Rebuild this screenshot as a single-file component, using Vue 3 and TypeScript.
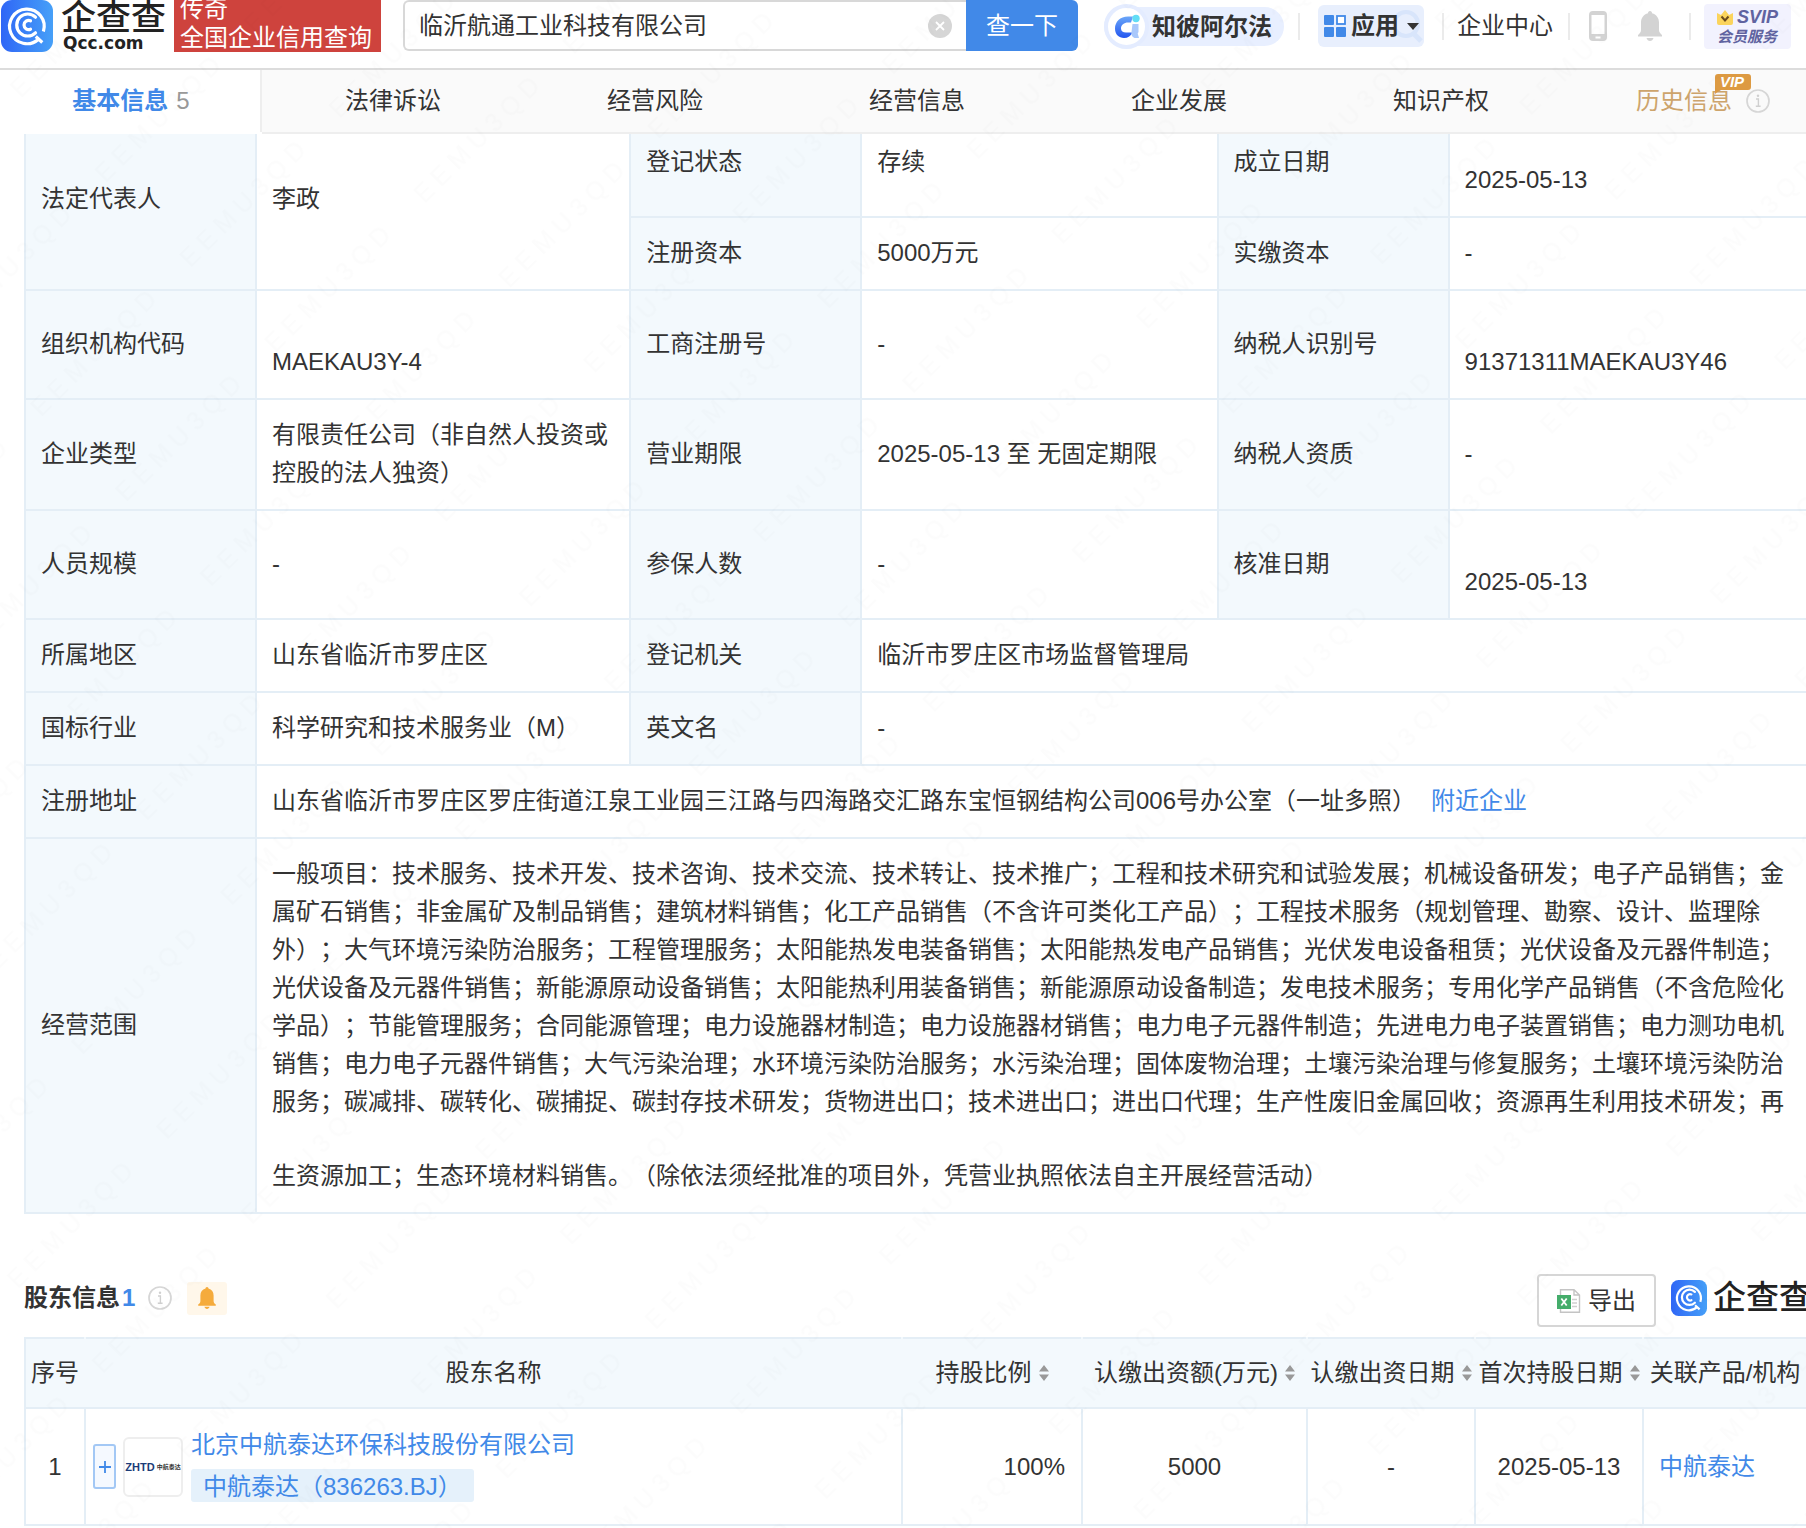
<script setup lang="ts">
import { ref } from 'vue'

interface Tab {
  label: string
  count?: number
  vip?: boolean
}

interface Column {
  label: string
  sortable: boolean
}

const keyword = ref('临沂航通工业科技有限公司')

const tabs: Tab[] = [
  { label: '基本信息', count: 5 },
  { label: '法律诉讼' },
  { label: '经营风险' },
  { label: '经营信息' },
  { label: '企业发展' },
  { label: '知识产权' },
  { label: '历史信息', vip: true },
]

const columns: Column[] = [
  { label: '序号', sortable: false },
  { label: '股东名称', sortable: false },
  { label: '持股比例', sortable: true },
  { label: '认缴出资额(万元)', sortable: true },
  { label: '认缴出资日期', sortable: true },
  { label: '首次持股日期', sortable: true },
  { label: '关联产品/机构', sortable: false },
]

const scope =
  '一般项目：技术服务、技术开发、技术咨询、技术交流、技术转让、技术推广；工程和技术研究和试验发展；机械设备研发；电子产品销售；金属矿石销售；非金属矿及制品销售；建筑材料销售；化工产品销售（不含许可类化工产品）；工程技术服务（规划管理、勘察、设计、监理除外）；大气环境污染防治服务；工程管理服务；太阳能热发电装备销售；太阳能热发电产品销售；光伏发电设备租赁；光伏设备及元器件制造；光伏设备及元器件销售；新能源原动设备销售；太阳能热利用装备销售；新能源原动设备制造；发电技术服务；专用化学产品销售（不含危险化学品）；节能管理服务；合同能源管理；电力设施器材制造；电力设施器材销售；电力电子元器件制造；先进电力电子装置销售；电力测功电机销售；电力电子元器件销售；大气污染治理；水环境污染防治服务；水污染治理；固体废物治理；土壤污染治理与修复服务；土壤环境污染防治服务；碳减排、碳转化、碳捕捉、碳封存技术研发；货物进出口；技术进出口；进出口代理；生产性废旧金属回收；资源再生利用技术研发；再生资源加工；生态环境材料销售。（除依法须经批准的项目外，凭营业执照依法自主开展经营活动）'
</script>

<template>
  <div class="page">
    <svg width="0" height="0" class="defs" aria-hidden="true">
      <defs>
        <linearGradient id="brand-blue" x1="0" y1="0" x2="1" y2="0">
          <stop offset="0" stop-color="#2f66f6" />
          <stop offset="1" stop-color="#46a0f8" />
        </linearGradient>
        <linearGradient id="alpha-blue" x1="0" y1="0" x2="0" y2="1">
          <stop offset="0" stop-color="#6aa6f8" />
          <stop offset="1" stop-color="#2456f0" />
        </linearGradient>
        <symbol id="brand" viewBox="0 0 52 52">
          <rect width="52" height="52" rx="11" fill="url(#brand-blue)" />
          <g fill="none" stroke="#fff" stroke-width="3.2">
            <path d="M37.500 39.200A17.300 17.300 0 1 1 42.400 31.500M34.800 36.500l6.500 6" />
            <path d="M34.500 17.200A11 11 0 1 0 34.500 32.800" stroke-linecap="round" />
            <path d="M29.500 20.800A4.600 4.600 0 1 0 29.500 29.200" stroke-linecap="round" />
          </g>
        </symbol>
        <symbol id="info" viewBox="0 0 24 24">
          <circle cx="12" cy="12" r="11" fill="none" stroke="#d6d6d6" stroke-width="1.700" />
          <path d="M10 10h2.400v7M9.800 17.300h4.800" fill="none" stroke="#d0d0d0" stroke-width="1.400" />
          <circle cx="12" cy="6.800" r="1.200" fill="#d0d0d0" />
        </symbol>
        <symbol id="bell" viewBox="0 0 24 30">
          <path
            d="M12 0c1.400 0 2 1 2 2.200 4.500 1.200 7 4.800 7 9.300v7.500c0 2 1 3.300 3 5v1.500H0V24c2-1.700 3-3 3-5v-7.500c0-4.500 2.500-8.100 7-9.300C10 1 10.600 0 12 0zM8.500 27h7c-.6 1.900-1.800 3-3.500 3s-2.900-1.100-3.500-3z"
            fill="currentColor"
          />
        </symbol>
      </defs>
    </svg>

    <header class="head">
      <div class="topbar">
        <a class="brand" href="#" aria-label="企查查">
          <svg class="brand-mark"><use href="#brand" /></svg>
          <span class="brand-text">
            <span class="brand-cn">企查查</span>
            <span class="brand-en">Qcc.com</span>
          </span>
        </a>
        <p class="slogan">传奇<br />全国企业信用查询</p>

        <form class="search" @submit.prevent>
          <div class="search-box">
            <input v-model="keyword" class="search-input" type="text" aria-label="搜索企业" />
            <button class="clear" type="button" aria-label="清空" @click="keyword = ''">
              <svg width="24" height="24" viewBox="0 0 24 24">
                <circle cx="12" cy="12" r="12" fill="#d6d6d6" />
                <path d="M8 8l8 8M16 8l-8 8" stroke="#fff" stroke-width="1.800" />
              </svg>
            </button>
          </div>
          <button class="search-btn" type="submit">查一下</button>
        </form>

        <a class="alpha" href="#">
          <span class="alpha-icon">
            <svg width="28" height="28" viewBox="0 0 28 28">
              <path
                d="M20 3.500H15C7 3.500 2 9 2 15.500 2 21.500 6 25 11 25c4 0 7-2 8.500-5.500h-5C10.500 20 8 18.500 8 15.500c0-3.500 3-6 7-6h3z"
                fill="url(#alpha-blue)"
              />
              <path d="M19.500 11h6v8l-.8 1.500L26 25h-4.500c-2.500-1-3.500-3-3-6z" fill="#a9c8fb" />
              <circle cx="23" cy="5.500" r="3.700" fill="#62ddf5" />
            </svg>
          </span>
          <span class="alpha-text">知彼阿尔法</span>
        </a>

        <nav class="tools" aria-label="工具">
          <i class="divider"></i>
          <button class="apps" type="button">
            <svg width="22" height="22" viewBox="0 0 22 22">
              <g fill="#4189e8">
                <rect width="10" height="10" rx="1" />
                <rect y="12" width="10" height="10" rx="1" />
                <rect x="12" y="12" width="10" height="10" rx="1" />
              </g>
              <rect x="13" y="1" width="8" height="8" fill="#fff" stroke="#4189e8" stroke-width="1.800" />
            </svg>
            <span>应用</span>
            <svg class="caret" width="12" height="7" viewBox="0 0 12 7"><path d="M0 0h12L6 7z" fill="#333" /></svg>
            <svg class="lens" width="32" height="36" viewBox="0 0 32 36">
              <circle cx="14" cy="15" r="12" fill="none" stroke="#c9dcfa" stroke-width="4" />
              <path d="M22 25l7 7" stroke="#c9dcfa" stroke-width="5" />
            </svg>
          </button>
          <i class="divider"></i>
          <a class="center" href="#">企业中心</a>
          <i class="divider"></i>
          <a class="icon-link" href="#" aria-label="手机版">
            <svg width="18" height="30" viewBox="0 0 18 30">
              <path
                fill-rule="evenodd"
                d="M4 0h10a4 4 0 0 1 4 4v22a4 4 0 0 1-4 4H4a4 4 0 0 1-4-4V4a4 4 0 0 1 4-4zM2.500 4v19h13V4zM6.500 25.500v2h5v-2z"
                fill="#d3d3d3"
              />
            </svg>
          </a>
          <a class="icon-link bell-link" href="#" aria-label="消息">
            <svg width="24" height="30"><use href="#bell" /></svg>
          </a>
          <i class="divider"></i>
          <a class="svip" href="#">
            <span class="svip-top">
              <svg width="16" height="15" viewBox="0 0 16 15">
                <path d="M0 3l4 2 4-5 4 5 4-2v10a2 2 0 0 1-2 2H2a2 2 0 0 1-2-2z" fill="#fbd45c" />
                <path d="M4.500 6.500L8 10.500l3.500-4" fill="none" stroke="#6b4a1c" stroke-width="2" />
              </svg>
              <span>SVIP</span>
            </span>
            <span class="svip-bottom">会员服务</span>
          </a>
        </nav>
      </div>

      <nav class="tabs" aria-label="企业信息">
        <a v-for="(tab, i) in tabs" :key="tab.label" href="#" class="tab" :class="{ active: i === 0, history: tab.vip }">
          <span class="tab-label">
            {{ tab.label }}
            <svg v-if="tab.vip" class="vip" width="36" height="20" viewBox="0 0 36 20" role="img" aria-label="VIP">
              <path d="M3 0h30a3 3 0 0 1 3 3v10a3 3 0 0 1-3 3H5l-5 4V3a3 3 0 0 1 3-3z" fill="#dd9a42" />
              <text x="17" y="13" text-anchor="middle" class="vip-text">VIP</text>
            </svg>
          </span>
          <span v-if="tab.count" class="tab-count">{{ tab.count }}</span>
          <svg v-if="tab.vip" class="tab-info" width="24" height="24"><use href="#info" /></svg>
        </a>
      </nav>
    </header>

    <main class="main">
      <table class="info">
        <colgroup>
          <col class="c-label" />
          <col class="c-first" />
          <col class="c-label" />
          <col class="c-second" />
          <col class="c-label" />
          <col />
        </colgroup>
        <tbody>
          <tr>
            <th rowspan="2" scope="row">法定代表人</th>
            <td rowspan="2">李政</td>
            <th scope="row">登记状态</th>
            <td>存续</td>
            <th scope="row">成立日期</th>
            <td>2025-05-13<i class="copy-slot"></i></td>
          </tr>
          <tr>
            <th scope="row">注册资本</th>
            <td>5000万元</td>
            <th scope="row">实缴资本</th>
            <td>-</td>
          </tr>
          <tr>
            <th scope="row">组织机构代码</th>
            <td>MAEKAU3Y-4<i class="copy-slot"></i></td>
            <th scope="row">工商注册号</th>
            <td>-</td>
            <th scope="row">纳税人识别号</th>
            <td>91371311MAEKAU3Y46<i class="copy-slot"></i></td>
          </tr>
          <tr>
            <th scope="row">企业类型</th>
            <td>有限责任公司（非自然人投资或控股的法人独资）</td>
            <th scope="row">营业期限</th>
            <td>2025-05-13 至 无固定期限</td>
            <th scope="row">纳税人资质</th>
            <td>-</td>
          </tr>
          <tr>
            <th scope="row">人员规模</th>
            <td>-</td>
            <th scope="row">参保人数</th>
            <td>-</td>
            <th scope="row">核准日期</th>
            <td>2025-05-13<i class="copy-slot"></i></td>
          </tr>
          <tr>
            <th scope="row">所属地区</th>
            <td>山东省临沂市罗庄区</td>
            <th scope="row">登记机关</th>
            <td colspan="3">临沂市罗庄区市场监督管理局</td>
          </tr>
          <tr>
            <th scope="row">国标行业</th>
            <td>科学研究和技术服务业（M）</td>
            <th scope="row">英文名</th>
            <td colspan="3">-</td>
          </tr>
          <tr>
            <th scope="row">注册地址</th>
            <td colspan="5">
              山东省临沂市罗庄区罗庄街道江泉工业园三江路与四海路交汇路东宝恒钢结构公司006号办公室（一址多照）<a
                class="nearby"
                href="#"
                >附近企业</a
              >
            </td>
          </tr>
          <tr>
            <th scope="row">经营范围</th>
            <td colspan="5">{{ scope }}<i class="copy-slot"></i></td>
          </tr>
        </tbody>
      </table>

      <section class="holders">
        <div class="section-head">
          <h2 class="section-title">股东信息<span class="section-count">1</span></h2>
          <svg class="section-info" width="24" height="24"><use href="#info" /></svg>
          <button class="follow" type="button" aria-label="监控">
            <svg width="18" height="22"><use href="#bell" /></svg>
          </button>
          <button class="export" type="button">
            <svg width="24" height="24" viewBox="0 0 24 24">
              <path d="M3.500.8H17L22.500 6v17.200h-19zM17 .8V6h5.500" fill="#fff" stroke="#c4c4c4" stroke-width="1.400" />
              <path d="M15 10.500h5M15 14h5M15 17.500h5" stroke="#cfcfcf" stroke-width="1.300" />
              <rect y="6" width="14" height="14" fill="#45ad6b" />
              <path d="M4.300 9.500l5.400 7M9.700 9.500l-5.400 7" stroke="#fff" stroke-width="1.800" />
            </svg>
            导出
          </button>
          <div class="stamp">
            <svg width="36" height="36"><use href="#brand" /></svg>
            <span class="stamp-text">企查查</span>
          </div>
        </div>

        <table class="list">
          <colgroup>
            <col class="l-no" />
            <col />
            <col class="l-ratio" />
            <col class="l-amount" />
            <col class="l-date" />
            <col class="l-date" />
            <col class="l-org" />
          </colgroup>
          <thead>
            <tr>
              <th v-for="col in columns" :key="col.label" scope="col">
                <button v-if="col.sortable" class="sort" type="button">
                  {{ col.label }}
                  <svg width="10" height="16" viewBox="0 0 10 16">
                    <path d="M5 0l5 6.500H0zM5 16L0 9.500h10z" fill="#999" />
                  </svg>
                </button>
                <template v-else>{{ col.label }}</template>
              </th>
            </tr>
          </thead>
          <tbody>
            <tr>
              <td>1</td>
              <td>
                <div class="holder">
                  <button class="expand" type="button" aria-label="展开">
                    <svg width="12" height="12" viewBox="0 0 12 12">
                      <path d="M6 0v12M0 6h12" stroke="#4189e8" stroke-width="1.800" />
                    </svg>
                  </button>
                  <span class="holder-logo"><b>ZHTD</b><small>中航泰达</small></span>
                  <div class="holder-names">
                    <a href="#">北京中航泰达环保科技股份有限公司</a>
                    <a class="stock" href="#">中航泰达（836263.BJ）</a>
                  </div>
                </div>
              </td>
              <td class="right">100%</td>
              <td>5000</td>
              <td>-</td>
              <td>2025-05-13</td>
              <td class="left"><a href="#">中航泰达</a></td>
            </tr>
          </tbody>
        </table>
      </section>
    </main>

    <svg class="watermark" aria-hidden="true">
      <defs>
        <pattern id="wm" width="211" height="120" patternUnits="userSpaceOnUse" patternTransform="translate(172 253) rotate(-45)">
          <text x="2" y="24" class="wm-text">E E M U 3 Q D</text>
        </pattern>
      </defs>
      <rect width="100%" height="100%" fill="url(#wm)" />
    </svg>
  </div>
</template>

<style>
body {
  margin: 0;
  background: #fff;
}
</style>

<style scoped>
.page {
  position: relative;
  min-height: 100vh;
  overflow: hidden;
  box-sizing: border-box;
  color: #333;
  font-family: 'Liberation Sans', 'Noto Sans CJK SC', sans-serif;
  font-size: 24px;
  line-height: 38px;
  text-spacing-trim: space-all;
}
.page *,
.page *::before {
  box-sizing: border-box;
}
.defs {
  position: absolute;
}
a {
  color: #4189e8;
  text-decoration: none;
}
button {
  padding: 0;
  border: 0;
  background: none;
  color: inherit;
  font: inherit;
  cursor: pointer;
}
svg {
  display: block;
  flex: none;
}

/* top bar */
.head {
  position: relative;
  z-index: 1;
  background: #fff;
}
.topbar {
  display: flex;
  align-items: flex-start;
  height: 70px;
  border-bottom: 2px solid #dcdcdc;
  white-space: nowrap;
}
.brand {
  display: flex;
  gap: 8px;
  padding-left: 1px;
  color: #222;
}
.brand-mark {
  width: 52px;
  height: 52px;
}
.brand-text {
  display: flex;
  flex-direction: column;
  width: 113px;
}
.brand-cn {
  font-size: 35px;
  font-weight: 500;
  line-height: 35px;
}
.brand-en {
  padding-left: 2px;
  font-family: 'DejaVu Sans', sans-serif;
  font-size: 17px;
  font-weight: 700;
  line-height: 17px;
}
.slogan {
  display: flex;
  flex-direction: column;
  justify-content: flex-end;
  width: 207px;
  height: 52px;
  margin: 0;
  padding-left: 6px;
  background: #ce433d;
  color: #fff;
  line-height: 29px;
}
.search {
  display: flex;
  flex: 1;
  margin-left: 22px;
}
.search-box {
  display: flex;
  flex: 1;
  align-items: center;
  height: 51px;
  padding: 0 14px;
  border: 2px solid #d8d8d8;
  border-right: 0;
  border-radius: 6px 0 0 6px;
}
.search-input {
  flex: 1;
  min-width: 0;
  padding: 0;
  border: 0;
  outline: 0;
  background: none;
  color: #333;
  font: inherit;
}
.search-btn {
  width: 112px;
  height: 51px;
  border-radius: 0 6px 6px 0;
  background: #4189e8;
  color: #fff;
}
.alpha {
  display: flex;
  align-items: center;
  height: 39px;
  margin: 7px 0 0 26px;
  padding-right: 12px;
  border-radius: 20px;
  background: #e8efff;
  color: #333;
  font-weight: 700;
}
.alpha-icon {
  display: flex;
  align-items: center;
  justify-content: center;
  width: 45px;
  height: 45px;
  margin-right: 3px;
  border: 4px solid #e4ecff;
  border-radius: 50%;
  background: #fff;
}
.tools {
  display: flex;
  align-items: center;
  height: 52px;
  padding-right: 15px;
}
.divider {
  width: 2px;
  height: 27px;
  background: #ebebeb;
}
.tools > .divider:first-child {
  margin-left: 14px;
}
.apps {
  position: relative;
  display: flex;
  align-items: center;
  height: 42px;
  margin: 0 18px;
  padding: 0 5px 0 6px;
  border-radius: 6px;
  background: #e8effd;
  font-weight: 700;
}
.apps span {
  margin: 0 8px 0 5px;
}
.lens {
  position: absolute;
  top: 4px;
  right: 0;
  opacity: 0.5;
}
.apps span,
.caret {
  position: relative;
  z-index: 1;
}
.center {
  margin: 0 15px 0 13px;
  color: #333;
}
.icon-link {
  margin-left: 19px;
}
.bell-link {
  margin: 0 27px 0 31px;
  color: #d3d3d3;
}
.svip {
  display: flex;
  flex-direction: column;
  width: 87px;
  height: 45px;
  margin-left: 13px;
  padding: 4px 0 0 13px;
  border-radius: 4px;
  background: #f2f2fe;
  color: #6063a0;
  font-size: 15px;
  font-style: italic;
  font-weight: 700;
  line-height: 19px;
}
.svip-top {
  display: flex;
  align-items: center;
  gap: 4px;
  font-size: 18px;
}

/* tabs */
.tabs {
  display: flex;
  width: calc(100% + 28px);
  height: 64px;
  background: #fafafa;
}
.tab {
  display: flex;
  flex: 1;
  align-items: center;
  justify-content: center;
  border-bottom: 2px solid #eee;
  color: #333;
}
.tab.active {
  gap: 8px;
  box-shadow: inset -2px 0 #eee;
  border-bottom-color: #fff;
  background: #fff;
  color: #4189e8;
}
.tab.active .tab-label {
  font-weight: 700;
}
.tab-count {
  color: #999;
}
.tab.history {
  gap: 14px;
  color: #cda46c;
}
.tab-label {
  position: relative;
}
.vip {
  position: absolute;
  top: -8px;
  right: -19px;
}
.vip-text {
  fill: #fff;
  font-size: 15px;
  font-style: italic;
  font-weight: 700;
}

/* registration details */
.main {
  padding-left: 24px;
  border-left: 1px solid #f2f2f2;
  margin-left: -1px;
}
table {
  width: calc(100% + 2px);
  border-collapse: collapse;
  table-layout: fixed;
}
.info {
  margin-top: -27px;
}
.c-label {
  width: 231px;
}
.c-first {
  width: 21%;
}
.c-second {
  width: 20%;
}
.info th,
.info td {
  padding: 16px 14px 17px 15px;
  border: 2px solid #e4eef6;
  font-weight: 400;
  text-align: left;
}
.info th {
  background: #f3f9fd;
}
.copy-slot {
  display: inline-block;
  width: 0;
  height: 74px;
  vertical-align: bottom;
}
.nearby {
  margin-left: 15px;
}

/* shareholders */
.section-head {
  display: flex;
  align-items: center;
  height: 48px;
  margin: 60px 0 15px;
}
.section-title {
  margin: 0;
  font-size: 24px;
  font-weight: 700;
}
.section-count {
  margin-left: 2px;
  color: #4189e8;
}
.section-info {
  margin-left: 13px;
}
.follow {
  display: flex;
  align-items: center;
  justify-content: center;
  width: 40px;
  height: 33px;
  margin-left: 15px;
  border-radius: 3px;
  background: #fff7ea;
  color: #f5ab3c;
}
.export {
  display: flex;
  align-items: center;
  align-self: flex-start;
  justify-content: center;
  gap: 7px;
  width: 119px;
  height: 53px;
  margin-left: auto;
  border: 2px solid #d6d6d6;
  border-radius: 4px;
}
.stamp {
  display: flex;
  align-items: center;
  gap: 6px;
  width: 135px;
  margin-left: 15px;
  color: #222;
  white-space: nowrap;
}
.stamp-text {
  font-size: 33px;
  font-weight: 500;
}
.list th,
.list td {
  padding: 0;
  border: 2px solid #e4eef6;
  text-align: center;
}
.list th {
  height: 70px;
  border-right-color: #f3f9fd;
  border-left-color: #f3f9fd;
  background: #f3f9fd;
  font-weight: 400;
  white-space: nowrap;
}
.list th:first-child {
  border-left-color: #e4eef6;
}
.list td {
  height: 117px;
}
.list .right {
  padding-right: 16px;
  text-align: right;
}
.list .left {
  padding-left: 15px;
  text-align: left;
}
.l-no {
  width: 60px;
}
.l-ratio {
  width: 180px;
}
.l-amount {
  width: 225px;
}
.l-date {
  width: 168px;
}
.l-org {
  width: 164px;
}
.sort {
  display: inline-flex;
  align-items: center;
  gap: 7px;
}
.holder {
  display: flex;
  align-items: center;
  padding-left: 7px;
  text-align: left;
}
.expand {
  display: flex;
  align-items: center;
  justify-content: center;
  width: 23px;
  height: 45px;
  margin-right: 7px;
  border: 2px solid #a3c8f5;
  border-radius: 3px;
  background: #f5f9ff;
}
.holder-logo {
  display: flex;
  align-items: center;
  justify-content: center;
  gap: 2px;
  width: 60px;
  height: 60px;
  margin-right: 8px;
  border: 2px solid #eee;
  border-radius: 6px;
  color: #1c3c78;
  font-size: 11px;
  line-height: 12px;
  white-space: nowrap;
}
.holder-logo small {
  color: #333;
  font-size: 6px;
  font-weight: 700;
}
.holder-names {
  display: flex;
  flex-direction: column;
  align-items: flex-start;
  gap: 5px;
  padding-bottom: 5px;
}
.stock {
  height: 33px;
  padding: 0 12px;
  border-radius: 3px;
  background: #e5f1fb;
  line-height: 36px;
}

.watermark {
  position: absolute;
  z-index: 2;
  inset: 0;
  width: 100%;
  height: 100%;
  pointer-events: none;
}
.wm-text {
  fill: #000;
  fill-opacity: 0.012;
  font-size: 25px;
}
</style>
